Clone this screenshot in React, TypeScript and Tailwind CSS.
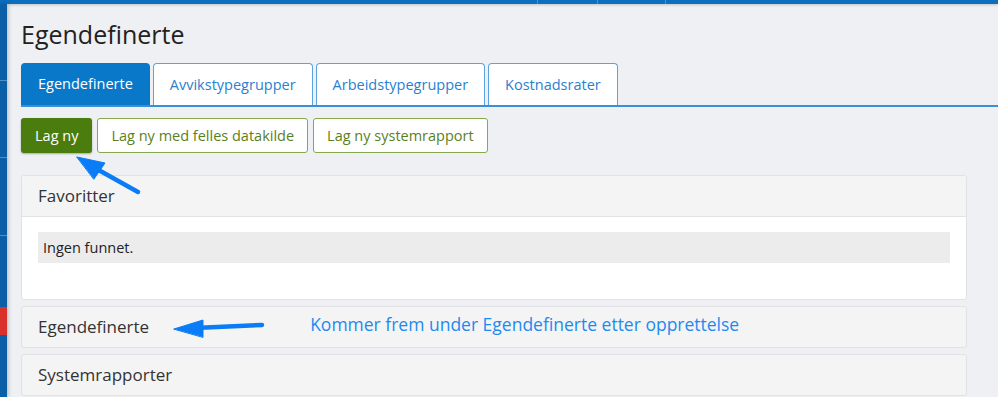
import React from 'react';

const tabs = ['Egendefinerte', 'Avvikstypegrupper', 'Arbeidstypegrupper', 'Kostnadsrater'];

const PanelHeader: React.FC<{ title: string; children?: React.ReactNode }> = ({ title, children }) => (
  <div className="h-[40px] flex items-center px-[16px] text-[17px] text-[#333]">
    {title}
    {children}
  </div>
);

export default function App() {
  return (
    <div className="relative w-[998px] h-[397px] overflow-hidden bg-[#eff0f4] font-['Open_Sans',sans-serif] flex flex-col">
      {/* top nav strip */}
      <div className="h-[4px] bg-[#0b6fbe] flex shrink-0 shadow-[0_1px_3px_rgba(0,0,0,0.2)] relative z-10">
        <div className="w-[537px] h-full" />
        <div className="w-[60px] h-full border-l border-[#4f92cf]" />
        <div className="w-[68px] h-full border-l border-[#4f92cf]" />
        <div className="flex-1 h-full border-l border-[#4f92cf]" />
      </div>

      <div className="flex flex-1 min-h-0">
        {/* side nav strip */}
        <div className="w-[7px] bg-[#0a5fa6] flex flex-col shrink-0 shadow-[1px_0_4px_rgba(0,0,0,0.25)] relative z-10">
          <div className="h-[76px]" />
          <div className="h-[77px] border-t border-[#4f8fc7]" />
          <div className="h-[78px] border-t border-[#4f8fc7]" />
          <div className="h-[72px] border-t border-[#4f8fc7]" />
          <div className="h-[28px] bg-[#d9302b]" />
          <div className="flex-1" />
        </div>

        <main className="flex-1 pl-[14px] pt-[13px]">
          <h1 className="text-[25px] leading-[34px] text-[#222]">Egendefinerte</h1>

          {/* tabs */}
          <div className="mt-[13px] flex gap-[3px] items-end border-b-2 border-[#3a8fd6] h-[43px]">
            {tabs.map((t, i) => (
              <div
                key={t}
                className={
                  i === 0
                    ? 'h-[42px] px-[17px] flex items-center rounded-t-[4px] bg-[#0a78c8] text-white text-[14.5px]'
                    : 'h-[42px] px-[16px] flex items-center rounded-t-[4px] bg-white border border-b-0 border-[#5aa3df] text-[#2b7fcf] text-[14.5px]'
                }
              >
                {t}
              </div>
            ))}
          </div>

          {/* action buttons */}
          <div className="mt-[11px] flex gap-[5px]">
            <button className="h-[35px] px-[14px] rounded-[3px] bg-[#4b7c0e] text-white text-[14.5px] shadow-[0_1px_2px_rgba(0,0,0,0.3)]">
              Lag ny
            </button>
            <button className="h-[35px] px-[13px] rounded-[3px] bg-white border border-[#86a84e] text-[#5b7f1d] text-[14.5px]">
              Lag ny med felles datakilde
            </button>
            <button className="h-[35px] px-[13px] rounded-[3px] bg-white border border-[#86a84e] text-[#5b7f1d] text-[14.5px]">
              Lag ny systemrapport
            </button>
          </div>

          {/* panels */}
          <div className="mt-[22px] w-[946px] flex flex-col gap-[6px]">
            <section className="rounded-[3px] border border-[#e1e2e6] bg-white overflow-hidden">
              <div className="bg-[#f4f4f4] border-b border-[#e3e3e3]">
                <PanelHeader title="Favoritter" />
              </div>
              <div className="px-[16px] pt-[15px] pb-[36px]">
                <div className="h-[31px] bg-[#ececec] flex items-center px-[5px] text-[14.5px] text-[#222]">
                  Ingen funnet.
                </div>
              </div>
            </section>

            <section className="rounded-[3px] border border-[#e1e2e6] bg-[#f4f4f4]">
              <PanelHeader title="Egendefinerte">
                <span className="ml-[161px] -mt-[5px] text-[17.5px] text-[#1d8af0]">
                  Kommer frem under Egendefinerte etter opprettelse
                </span>
              </PanelHeader>
            </section>

            <section className="rounded-[3px] border border-[#e1e2e6] bg-[#f4f4f4]">
              <PanelHeader title="Systemrapporter" />
            </section>
          </div>
        </main>
      </div>

      {/* annotation arrows */}
      <svg className="absolute inset-0 pointer-events-none" width="998" height="397" viewBox="0 0 998 397">
        <g fill="#0a7cf5" stroke="#0a7cf5" strokeLinecap="round" strokeLinejoin="round">
          <line x1="138" y1="192" x2="95" y2="168" strokeWidth="4.5" />
          <polygon points="77,157 105,163 94,179" strokeWidth="1" />
          <line x1="262" y1="325" x2="195" y2="328" strokeWidth="4.5" />
          <polygon points="174,329 203,320 203,337" strokeWidth="1" />
        </g>
      </svg>
    </div>
  );
}
